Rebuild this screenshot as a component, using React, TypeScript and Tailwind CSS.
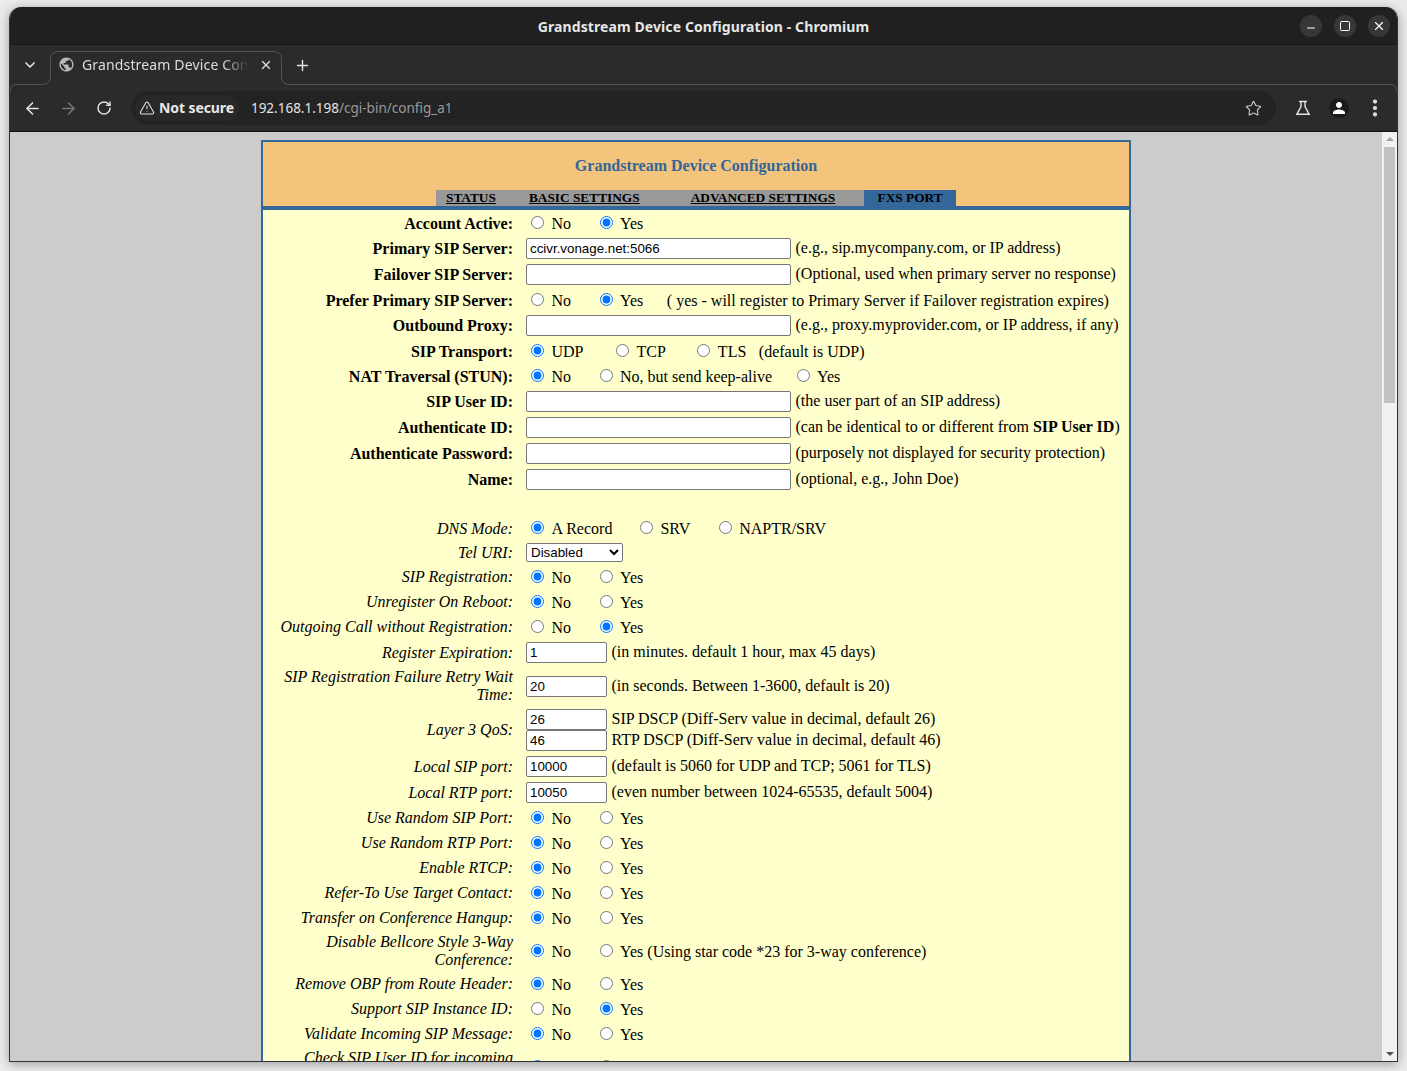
import { ArrowLeft, ArrowRight, ChevronDown, EllipsisVertical, Minus, Plus, RotateCw, Square, Star, TriangleAlert, X } from "lucide-react";
import { MdPerson, MdPublic } from "react-icons/md";

type Opt = { text: string; checked?: boolean; gap?: string };

function Options({ opts, after, low }: { opts: Opt[]; after?: React.ReactNode; low?: boolean }) {
  return (
    <div className={`flex items-center ${low ? "pt-[2px]" : ""}`}>
      {opts.map((o) => (
        <label key={o.text} className={`flex items-center pl-[5px] ${o.gap ?? "mr-[23.5px]"}`}>
          <input type="radio" checked={!!o.checked} readOnly className="w-[13px] h-[13px] -mt-[2px]" />
          <span className="ml-[7.5px]">{o.text}</span>
        </label>
      ))}
      {after}
    </div>
  );
}

// most of the page is plain No / Yes radios
function noYes(yes: boolean, after?: string) {
  return (
    <Options
      low={!!after}
      opts={[
        { text: "No", checked: !yes },
        { text: "Yes", checked: yes, gap: "mr-0" },
      ]}
      after={after ? <span className="ml-[23.5px]">{after}</span> : undefined}
    />
  );
}

function TextBox({ value = "", small }: { value?: string; small?: boolean }) {
  return (
    <input
      type="text"
      value={value}
      readOnly
      className={`h-[21px] border border-[#767676] rounded-[2px] bg-white px-[3px] text-[13.33px] text-black font-['Liberation_Sans',sans-serif] ${small ? "w-[81px]" : "w-[265px]"}`}
    />
  );
}

function InputRow({ value, small, hint, low }: { value?: string; small?: boolean; hint: React.ReactNode; low?: boolean }) {
  return (
    <div className="flex items-center gap-[4.5px] h-[21px]">
      <TextBox value={value} small={small} />
      <span className={`whitespace-nowrap ${low ? "" : "pb-[2px]"}`}>{hint}</span>
    </div>
  );
}

function Row({ label, bold, h = "h-[25px]", lift = "pb-[2px]", children }: { label: string; bold?: boolean; h?: string; lift?: string; children: React.ReactNode }) {
  return (
    <div className={`flex items-center ${h}`}>
      <div className={`w-[250px] pl-[17px] text-right ${lift} ${bold ? "font-bold" : "italic"}`}>{label}</div>
      <div className="ml-[13px]">{children}</div>
    </div>
  );
}

function ChromeBar() {
  return (
    <div className="shrink-0 font-['Noto_Sans',sans-serif]">
      <div className="relative h-[38px] bg-[#202020] border-b border-[#161616] flex items-center justify-center">
        <span className="text-[14px] font-bold tracking-[0.1px] pt-[1px] text-[#e6e6e6]">Grandstream Device Configuration - Chromium</span>
        <div className="absolute right-[7px] top-[8px] flex gap-[12px]">
          <div className="w-[22px] h-[22px] rounded-full bg-[#373737] flex items-center justify-center text-white">
            <Minus size={12} strokeWidth={2} className="mt-[4px]" />
          </div>
          <div className="w-[22px] h-[22px] rounded-full bg-[#373737] flex items-center justify-center text-white">
            <Square size={12} strokeWidth={2} />
          </div>
          <div className="w-[22px] h-[22px] rounded-full bg-[#373737] flex items-center justify-center text-white">
            <X size={14} strokeWidth={2} />
          </div>
        </div>
      </div>
      <div className="relative h-[40px] bg-[#2b2b2b]">
        <svg width="1387" height="48" className="absolute left-0 top-0 overflow-visible" fill="none" stroke="#555555">
          <path
            d="M0.5 46 V45 Q0.5 39.5 7 39.5 H32 Q40.5 39.5 40.5 31 V14 Q40.5 6.5 49 6.5 H263 Q271.5 6.5 271.5 14 V31 Q271.5 39.5 280 39.5 H1380 Q1386.5 39.5 1386.5 46"
          />
        </svg>
        <ChevronDown size={16} strokeWidth={2.5} className="absolute left-[12px] top-[12px] text-[#e3e3e3]" />
        <div className="absolute left-[48px] top-[11px] flex items-center">
          <MdPublic size={17} className="text-[#b8b8b8]" />
          <span className="ml-[7px] w-[166px] overflow-hidden whitespace-nowrap text-[14px] tracking-[0.15px] leading-[17px] text-[#dcdcdc] [mask-image:linear-gradient(to_right,black_85%,transparent)]">
            Grandstream Device Configuration
          </span>
          <X size={14} strokeWidth={2.2} className="ml-[11px] text-[#e3e3e3]" />
        </div>
        <Plus size={17} strokeWidth={2} className="absolute left-[283.5px] top-[11.5px] text-[#e3e3e3]" />
      </div>
      <div className="h-[47px] bg-[#2b2b2b] border-b border-[#0f0f0f] flex items-center">
        <ArrowLeft size={19} strokeWidth={2} className="ml-[12.5px] text-[#e3e3e3]" />
        <ArrowRight size={19} strokeWidth={2} className="ml-[17px] text-[#777]" />
        <RotateCw size={16} strokeWidth={2.2} className="ml-[18.5px] text-[#e3e3e3]" />
        <div className="ml-[19px] w-[1145px] h-[34px] rounded-full bg-[#232323] flex items-center">
          <div className="ml-[4px] h-[26px] pl-[4px] pr-[5px] rounded-full bg-[#282828] flex items-center">
            <TriangleAlert size={16} strokeWidth={1.6} className="text-[#e3e3e3]" />
            <span className="ml-[4px] pb-[2px] text-[14px] font-bold tracking-[-0.1px] text-[#e8e8e8]">Not secure</span>
          </div>
          <span className="ml-[12px] text-[13.5px] text-[#e3e3e3]">
            192.168.1.198<span className="text-[#9a9a9a]">/cgi-bin/config_a1</span>
          </span>
          <Star size={17} strokeWidth={1.6} className="ml-auto mr-[14px] text-[#c8c8c8]" />
        </div>
        <svg width="16" height="16" viewBox="0 0 16 16" className="ml-[19px] text-[#e3e3e3]" fill="none" stroke="currentColor" strokeWidth="1.4">
          <path d="M4 1.5h8M6 1.5v5L1.8 14.3h12.4L10 6.5v-5" />
        </svg>
        <div className="ml-[18px] w-[20px] h-[20px] rounded-full bg-[#1a1a1a] flex items-center justify-center">
          <MdPerson size={18} className="text-white" />
        </div>
        <EllipsisVertical size={22} strokeWidth={2.6} className="ml-[15px] text-[#e3e3e3]" />
      </div>
    </div>
  );
}

function Scrollbar() {
  return (
    <div className="w-[15px] shrink-0 bg-[#f1f1f1] flex flex-col items-center">
      <div className="mt-[5px] w-0 h-0 border-x-[4px] border-x-transparent border-b-[4px] border-b-[#a3a3a3]" />
      <div className="mt-[6px] w-[11px] h-[256px] bg-[#c1c1c1]" />
      <div className="mt-auto mb-[5px] w-0 h-0 border-x-[4px] border-x-transparent border-t-[4px] border-t-[#505050]" />
    </div>
  );
}

export default function App() {
  return (
    <div className="w-[1407px] h-[1071px] overflow-hidden bg-[#ececec] pt-[7px] pl-[9px]">
      <div className="w-[1389px] h-[1055px] flex flex-col overflow-hidden rounded-t-[12px] border border-t-0 border-[#333] shadow-[0_2px_12px_rgba(0,0,0,0.35)]">
        <ChromeBar />
        <div className="flex flex-1 min-h-0">
          <div className="flex-1 min-w-0 bg-[#cccccc] overflow-hidden pt-[8px]">
            <div className="mx-auto w-[870px] border-2 border-[#336699] font-['Liberation_Serif',serif] text-[16px] leading-[18px] text-black">
              <div className="bg-[#f4c47c]">
                <div className="h-[48px] flex items-center justify-center font-bold text-[#336699]">Grandstream Device Configuration</div>
                <div className="ml-[173px] w-[520px] h-[16px] bg-[#999999] flex items-center whitespace-nowrap text-[13.33px] font-bold leading-none">
                  <span className="ml-[10px] pb-[1px] underline">STATUS</span>
                  <span className="ml-[33px] pb-[1px] underline">BASIC SETTINGS</span>
                  <span className="ml-[51px] pb-[1px] underline">ADVANCED SETTINGS</span>
                  <span className="ml-[29px] pb-[1px] w-[92px] h-full bg-[#336699] flex items-center justify-center">FXS PORT</span>
                </div>
              </div>
              <div className="border-t-4 border-[#336699] bg-[#ffffcc] pt-[1px]">
                <Row label="Account Active:" bold lift="">{noYes(true)}</Row>
                <Row label="Primary SIP Server:" bold lift="">
                  <InputRow value="ccivr.vonage.net:5066" hint="(e.g., sip.mycompany.com, or IP address)" />
                </Row>
                <Row label="Failover SIP Server:" bold h="h-[26px]" lift="pt-[2px]">
                  <InputRow low hint="(Optional, used when primary server no response)" />
                </Row>
                <Row label="Prefer Primary SIP Server:" bold lift="pt-[2px]">
                  {noYes(true, "( yes - will register to Primary Server if Failover registration expires)")}
                </Row>
                <Row label="Outbound Proxy:" bold h="h-[26px]" lift="pt-[2px]">
                  <InputRow low hint="(e.g., proxy.myprovider.com, or IP address, if any)" />
                </Row>
                <Row label="SIP Transport:" bold lift="pt-[2px]">
                  <Options
                    low
                    opts={[
                      { text: "UDP", checked: true, gap: "mr-[27.5px]" },
                      { text: "TCP", gap: "mr-[26.5px]" },
                      { text: "TLS", gap: "mr-[12.5px]" },
                    ]}
                    after={<span>(default is UDP)</span>}
                  />
                </Row>
                <Row label="NAT Traversal (STUN):" bold lift="pt-[2px]">
                  <Options
                    low
                    opts={[
                      { text: "No", checked: true },
                      { text: "No, but send keep-alive", gap: "mr-[19.5px]" },
                      { text: "Yes", gap: "mr-0" },
                    ]}
                  />
                </Row>
                <Row label="SIP User ID:" bold h="h-[26px]" lift="pt-[2px]">
                  <InputRow low hint="(the user part of an SIP address)" />
                </Row>
                <Row label="Authenticate ID:" bold h="h-[26px]" lift="pt-[2px]">
                  <InputRow low hint={<>(can be identical to or different from <b>SIP User ID</b>)</>} />
                </Row>
                <Row label="Authenticate Password:" bold h="h-[26px]" lift="pt-[2px]">
                  <InputRow low hint="(purposely not displayed for security protection)" />
                </Row>
                <Row label="Name:" bold h="h-[26px]" lift="pt-[2px]">
                  <InputRow low hint="(optional, e.g., John Doe)" />
                </Row>
                <div className="h-[23px]" />
                <Row label="DNS Mode:" lift="pt-[2px]">
                  <Options low opts={[{ text: "A Record", checked: true, gap: "mr-[22.5px]" }, { text: "SRV" }, { text: "NAPTR/SRV", gap: "mr-0" }]} />
                </Row>
                <Row label="Tel URI:" lift="">
                  <select className="block w-[97px] h-[19px] border border-[#767676] rounded-[2px] bg-white text-[13.33px] font-['Liberation_Sans',sans-serif] appearance-auto">
                    <option>Disabled</option>
                  </select>
                </Row>
                <Row label="SIP Registration:">{noYes(false)}</Row>
                <Row label="Unregister On Reboot:">{noYes(false)}</Row>
                <Row label="Outgoing Call without Registration:">{noYes(true)}</Row>
                <Row label="Register Expiration:" lift="">
                  <InputRow small value="1" hint="(in minutes. default 1 hour, max 45 days)" />
                </Row>
                <Row label="SIP Registration Failure Retry Wait Time:" h="h-[42px]" lift="">
                  <InputRow low small value="20" hint="(in seconds. Between 1-3600, default is 20)" />
                </Row>
                <Row label="Layer 3 QoS:" h="h-[46px]" lift="">
                  <InputRow small value="26" hint="SIP DSCP (Diff-Serv value in decimal, default 26)" />
                  <InputRow small value="46" hint="RTP DSCP (Diff-Serv value in decimal, default 46)" />
                </Row>
                <Row label="Local SIP port:" h="h-[26px]" lift="pt-[2px]">
                  <InputRow low small value="10000" hint="(default is 5060 for UDP and TCP; 5061 for TLS)" />
                </Row>
                <Row label="Local RTP port:" h="h-[27px]" lift="">
                  <InputRow small value="10050" hint="(even number between 1024-65535, default 5004)" />
                </Row>
                <Row label="Use Random SIP Port:">{noYes(false)}</Row>
                <Row label="Use Random RTP Port:">{noYes(false)}</Row>
                <Row label="Enable RTCP:">{noYes(false)}</Row>
                <Row label="Refer-To Use Target Contact:">{noYes(false)}</Row>
                <Row label="Transfer on Conference Hangup:">{noYes(false)}</Row>
                <Row label="Disable Bellcore Style 3-Way Conference:" h="h-[41px]">
                  <Options
                    opts={[
                      { text: "No", checked: true },
                      { text: "Yes (Using star code *23 for 3-way conference)", gap: "mr-0" },
                    ]}
                  />
                </Row>
                <Row label="Remove OBP from Route Header:">{noYes(false)}</Row>
                <Row label="Support SIP Instance ID:">{noYes(true)}</Row>
                <Row label="Validate Incoming SIP Message:">{noYes(false)}</Row>
                <Row label="Check SIP User ID for incoming INVITE:" h="h-[41px]">{noYes(false)}</Row>
              </div>
            </div>
          </div>
          <Scrollbar />
        </div>
      </div>
    </div>
  );
}
